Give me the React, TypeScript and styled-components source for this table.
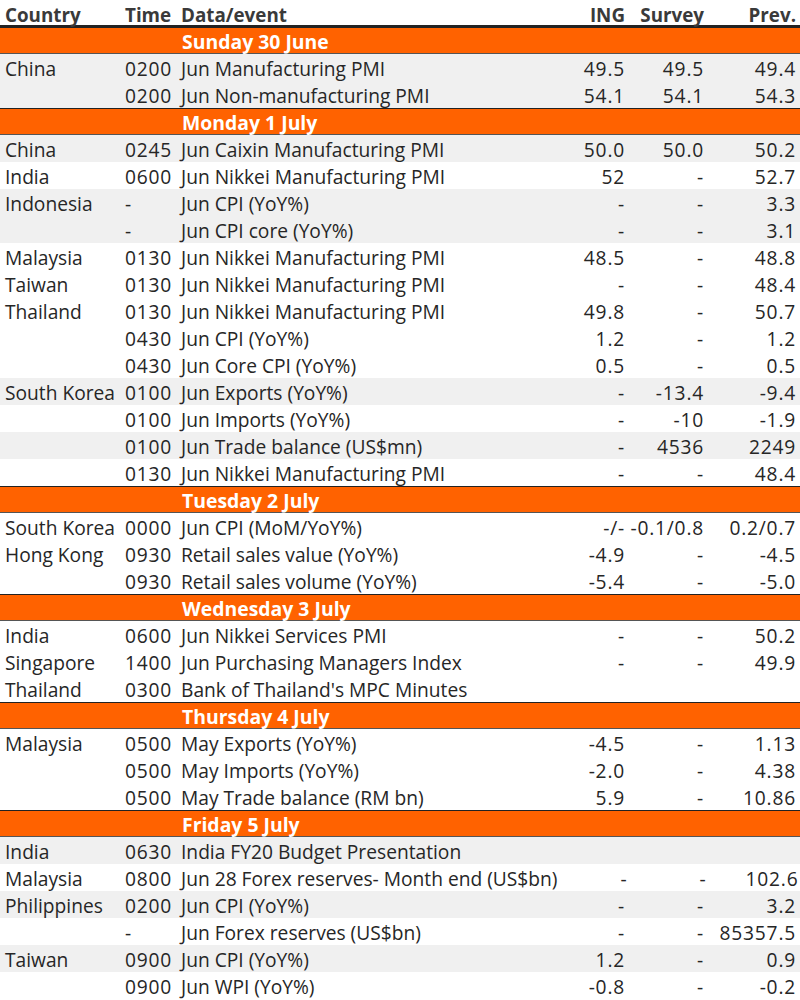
import React from "react";
import styled, { createGlobalStyle } from "styled-components";

const Global = createGlobalStyle`
  html, body { margin: 0; padding: 0; background: #fff; }
  body { font-family: "Open Sans", "Liberation Sans", sans-serif; }
`;

type Row = {
  c?: string;
  t: string;
  d: string;
  ing?: string;
  sur?: string;
  prev?: string;
  shade?: boolean;
};

type Day = { label: string; rows: Row[] };

const days: Day[] = [
  {
    label: "Sunday 30 June",
    rows: [
      { c: "China", t: "0200", d: "Jun Manufacturing PMI", ing: "49.5", sur: "49.5", prev: "49.4", shade: true },
      { t: "0200", d: "Jun Non-manufacturing PMI", ing: "54.1", sur: "54.1", prev: "54.3", shade: true },
    ],
  },
  {
    label: "Monday 1 July",
    rows: [
      { c: "China", t: "0245", d: "Jun Caixin Manufacturing PMI", ing: "50.0", sur: "50.0", prev: "50.2", shade: true },
      { c: "India", t: "0600", d: "Jun Nikkei Manufacturing PMI", ing: "52", sur: "-", prev: "52.7" },
      { c: "Indonesia", t: "-", d: "Jun CPI (YoY%)", ing: "-", sur: "-", prev: "3.3", shade: true },
      { t: "-", d: "Jun CPI core (YoY%)", ing: "-", sur: "-", prev: "3.1", shade: true },
      { c: "Malaysia", t: "0130", d: "Jun Nikkei Manufacturing PMI", ing: "48.5", sur: "-", prev: "48.8" },
      { c: "Taiwan", t: "0130", d: "Jun Nikkei Manufacturing PMI", ing: "-", sur: "-", prev: "48.4" },
      { c: "Thailand", t: "0130", d: "Jun Nikkei Manufacturing PMI", ing: "49.8", sur: "-", prev: "50.7" },
      { t: "0430", d: "Jun CPI (YoY%)", ing: "1.2", sur: "-", prev: "1.2" },
      { t: "0430", d: "Jun Core CPI (YoY%)", ing: "0.5", sur: "-", prev: "0.5" },
      { c: "South Korea", t: "0100", d: "Jun Exports (YoY%)", ing: "-", sur: "-13.4", prev: "-9.4", shade: true },
      { t: "0100", d: "Jun Imports (YoY%)", ing: "-", sur: "-10", prev: "-1.9" },
      { t: "0100", d: "Jun Trade balance (US$mn)", ing: "-", sur: "4536", prev: "2249", shade: true },
      { t: "0130", d: "Jun Nikkei Manufacturing PMI", ing: "-", sur: "-", prev: "48.4" },
    ],
  },
  {
    label: "Tuesday 2 July",
    rows: [
      { c: "South Korea", t: "0000", d: "Jun CPI (MoM/YoY%)", ing: "-/-", sur: "-0.1/0.8", prev: "0.2/0.7" },
      { c: "Hong Kong", t: "0930", d: "Retail sales value (YoY%)", ing: "-4.9", sur: "-", prev: "-4.5" },
      { t: "0930", d: "Retail sales volume (YoY%)", ing: "-5.4", sur: "-", prev: "-5.0" },
    ],
  },
  {
    label: "Wednesday 3 July",
    rows: [
      { c: "India", t: "0600", d: "Jun Nikkei Services PMI", ing: "-", sur: "-", prev: "50.2" },
      { c: "Singapore", t: "1400", d: "Jun Purchasing Managers Index", ing: "-", sur: "-", prev: "49.9" },
      { c: "Thailand", t: "0300", d: "Bank of Thailand's MPC Minutes" },
    ],
  },
  {
    label: "Thursday 4 July",
    rows: [
      { c: "Malaysia", t: "0500", d: "May Exports (YoY%)", ing: "-4.5", sur: "-", prev: "1.13" },
      { t: "0500", d: "May Imports (YoY%)", ing: "-2.0", sur: "-", prev: "4.38" },
      { t: "0500", d: "May Trade balance (RM bn)", ing: "5.9", sur: "-", prev: "10.86" },
    ],
  },
  {
    label: "Friday 5 July",
    rows: [
      { c: "India", t: "0630", d: "India FY20 Budget Presentation", shade: true },
      { c: "Malaysia", t: "0800", d: "Jun 28 Forex reserves- Month end (US$bn)", ing: "-", sur: "-", prev: "102.6" },
      { c: "Philippines", t: "0200", d: "Jun CPI (YoY%)", ing: "-", sur: "-", prev: "3.2", shade: true },
      { t: "-", d: "Jun Forex reserves (US$bn)", ing: "-", sur: "-", prev: "85357.5" },
      { c: "Taiwan", t: "0900", d: "Jun CPI (YoY%)", ing: "1.2", sur: "-", prev: "0.9", shade: true },
      { t: "0900", d: "Jun WPI (YoY%)", ing: "-0.8", sur: "-", prev: "-0.2" },
    ],
  },
];

const Table = styled.div`
  width: 800px;
  display: flex;
  flex-direction: column;
  color: #262626;
  font-size: 19.2px;
`;

const Line = styled.div<{ $shade?: boolean }>`
  display: grid;
  grid-template-columns: 120px 56px 1fr 70px 79px 92px;
  align-items: center;
  height: 27px;
  box-sizing: border-box;
  padding: 1px 4px 0 5px;
  background: ${(p) => (p.$shade ? "#f0f0f0" : "#ffffff")};
  white-space: nowrap;
`;

const HeaderLine = styled(Line)`
  font-weight: 700;
  font-size: 18.8px;
  color: #3a3a3a;
  border-bottom: 2px solid #222;
  padding-top: 2px;
`;

const Band = styled.div`
  display: grid;
  grid-template-columns: 176px 1fr;
  align-items: center;
  height: 27px;
  box-sizing: border-box;
  padding-left: 5px;
  background: #ff6200;
  color: #fff;
  font-weight: 700;
  font-size: 19.4px;
  border-top: 1px solid #222;
  border-bottom: 1px solid #555;
`;

const BandLabel = styled.span`
  grid-column: 2;
  padding-left: 1px;
`;

const Cell = styled.span<{ $right?: boolean }>`
  text-align: ${(p) => (p.$right ? "right" : "left")};
  overflow: visible;
`;

const Num = styled(Cell)`
  letter-spacing: 0.8px;
`;

export default function App() {
  return (
    <>
      <Global />
      <Table>
        <HeaderLine>
          <Cell>Country</Cell>
          <Cell>Time</Cell>
          <Cell>Data/event</Cell>
          <Cell $right>ING</Cell>
          <Cell $right>Survey</Cell>
          <Cell $right>Prev.</Cell>
        </HeaderLine>
        {days.map((day) => (
          <React.Fragment key={day.label}>
            <Band>
              <BandLabel>{day.label}</BandLabel>
            </Band>
            {day.rows.map((r, i) => (
              <Line key={i} $shade={r.shade}>
                <Cell>{r.c ?? ""}</Cell>
                <Num>{r.t}</Num>
                <Cell>{r.d}</Cell>
                <Num $right>{r.ing ?? ""}</Num>
                <Num $right>{r.sur ?? ""}</Num>
                <Num $right>{r.prev ?? ""}</Num>
              </Line>
            ))}
          </React.Fragment>
        ))}
      </Table>
    </>
  );
}
